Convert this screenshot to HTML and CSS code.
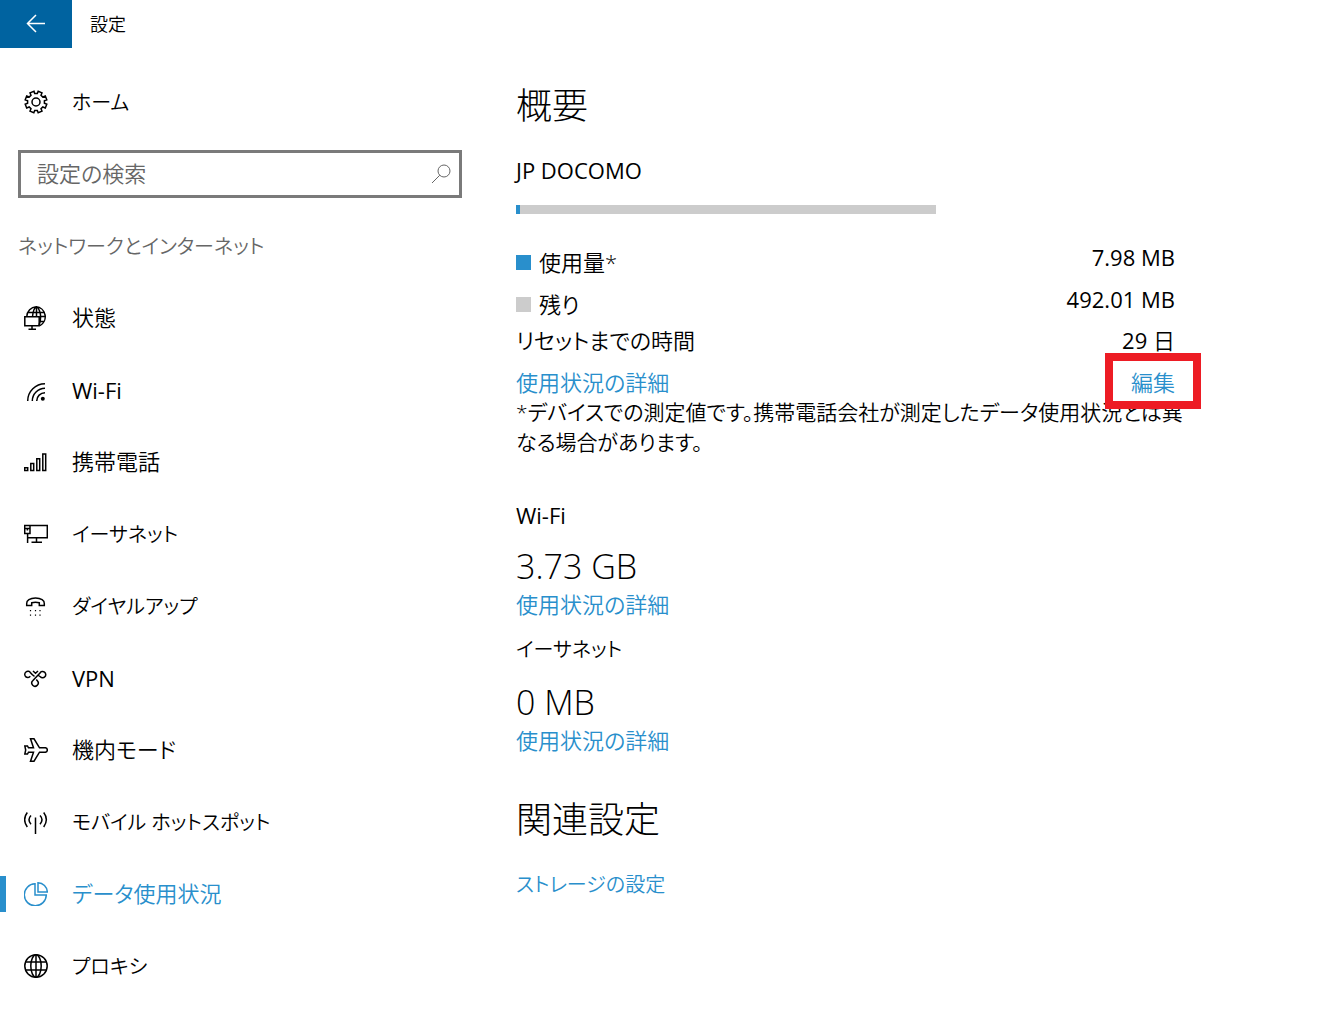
FILE: index.html
```html
<!DOCTYPE html>
<html lang="ja">
<head>
<meta charset="utf-8">
<meta name="viewport" content="width=device-width, initial-scale=1">
<title>設定</title>
<link rel="stylesheet" href="styles.css">
</head>
<body>
<header class="titlebar">
  <button class="back" type="button" aria-label="戻る">
    <svg class="icon" viewBox="0 0 24 24"><path d="M21 11.5H3.5M12 3L3.5 11.5L12 20"/></svg>
  </button>
  <span class="title">設定</span>
</header>
<div class="layout">
  <aside class="sidebar">
    <a class="nav-link home" href="#">
      <svg class="icon" viewBox="0 0 24 24"><circle cx="12" cy="12" r="4"/><path d="M10 1.2L10.7 3.6L13.3 3.6L14.2 1.2L18 2.8L17 5.2L18.8 7L21.3 6L22.8 9.8L20.4 10.8V13.2L22.8 14.2L21.3 18L18.800 17L17 18.800L18 21.200L14.200 22.800L13.300 20.400H10.700L9.800 22.800L6 21.200L7 18.800L5.200 17L2.700 18L1.200 14.200L3.600 13.200V10.800L1.200 9.800L2.700 6L5.200 7L7 5.200L6 2.800Z"/></svg>
      <span class="kana">ホーム</span>
    </a>
    <form class="search">
      <input class="search-input" type="search" placeholder="設定の検索" aria-label="設定の検索">
      <button class="search-button" type="submit" aria-label="検索">
        <svg class="icon thin" viewBox="0 0 24 24"><circle cx="15" cy="9" r="6"/><path d="M10.8 13.2L3 21"/></svg>
      </button>
    </form>
    <h2 class="category kana">ネットワークとインターネット</h2>
    <nav class="nav">
      <a class="nav-link" href="#">
        <svg class="icon" viewBox="0 0 24 24"><path d="M2.800 10.500A10 10 0 0 1 12.200 .8A9.800 10 0 0 1 16 19.600M3.500 6.500H21M16 10.500H22M16 15.500H20.500M8.500 10.500C9 5 10.500 1.500 12.500 .7C15 2 16.600 7 16.600 11C16.600 14.500 16 17 15 19M12.500 .7V10.500"/><path d="M.8 10.800H15.200V19.700H.8ZM8 19.700V23M4.500 23.200H12"/></svg>
        <span>状態</span>
      </a>
      <a class="nav-link" href="#">
        <svg class="icon" viewBox="0 0 24 24"><path d="M3.700 23A17.300 17.300 0 0 1 21 5.800M8.300 23A12.700 12.700 0 0 1 21 10.300M12.700 23A8.300 8.300 0 0 1 21 14.700"/><circle class="solid" cx="18.800" cy="20.700" r="2"/></svg>
        <span class="latin">Wi-Fi</span>
      </a>
      <a class="nav-link" href="#">
        <svg class="icon" viewBox="0 0 24 24"><path d="M.700 17.700H3.700V20.500H.700ZM6.800 13.500H9.700V20.500H6.800ZM12.800 8.800H15.700V20.500H12.800ZM18.800 4H21.700V20.500H18.800Z"/></svg>
        <span>携帯電話</span>
      </a>
      <a class="nav-link" href="#">
        <svg class="icon" viewBox="0 0 24 24"><path d="M6 3.600H23.300V15.700H3.600V21M.700 3.600H6V11.500H.700ZM.700 6.500H6M3.400 6.500V8.500M3.600 11.500V21M12.500 15.700V20M7.500 20.300H18"/></svg>
        <span class="kana">イーサネット</span>
      </a>
      <a class="nav-link" href="#">
        <svg class="icon" viewBox="0 0 24 24"><path d="M2.700 9.500C2.300 6.500 6 4 11.500 4S20.700 6.500 20.300 9.500V11.600H15.300V8.800Q11.500 7.600 7.700 8.800V11.600H2.700Z"/><path class="dots" d="M6.500 16V17.200M11.500 16V17.200M16 16V17.200M6.500 20.500V21.700M11.500 20.500V21.700M16 20.500V21.700"/></svg>
        <span class="kana">ダイヤルアップ</span>
      </a>
      <a class="nav-link" href="#">
        <svg class="icon" viewBox="0 0 24 24"><path d="M6.300 10.300A3.100 3.100 0 1 1 6.500 6.800C7.700 8.300 9 9.500 10.500 10.300M8.700 14.800L16 7A3.100 3.100 0 1 1 16.300 10.700L14.500 9.500M8.700 14.800A3.200 3.200 0 1 0 13.500 15L12.300 13.500M9 5L11.500 7.300L14 5"/></svg>
        <span class="latin">VPN</span>
      </a>
      <a class="nav-link" href="#">
        <svg class="icon" viewBox="0 0 24 24"><path d="M6.500 .8H10L15.500 9.800H21.500Q23.300 10.300 23.300 12T21.500 14.200H15.500L10 23.200H6.500L9.500 14.200H4.500L3.500 16H.8L1.700 12L.8 8H3.500L4.500 9.800H9.500Z"/></svg>
        <span>機内モード</span>
      </a>
      <a class="nav-link" href="#">
        <svg class="icon" viewBox="0 0 24 24"><path d="M11.500 7.500V24M3.300 2.500Q-2 9.500 3.300 17M19.700 2.500Q25 9.500 19.700 17M7 5.500Q3 9.700 7 14.200M16 5.500Q20 9.700 16 14.200"/></svg>
        <span class="kana">モバイル ホットスポット</span>
      </a>
      <a class="nav-link current" href="#" aria-current="page">
        <svg class="icon" viewBox="0 0 24 24"><path d="M11 1.800A11 11 0 1 0 22.300 13H11ZM14 .8V10H23.300A9.500 9.500 0 0 0 14 .8Z"/></svg>
        <span>データ使用状況</span>
      </a>
      <a class="nav-link" href="#">
        <svg class="icon" viewBox="0 0 24 24"><circle cx="12" cy="12" r="11.200"/><ellipse cx="12" cy="12" rx="5.200" ry="11.200"/><path d="M12 .8V23.200M1.800 8H22.200M1.800 16H22.200"/></svg>
        <span class="kana">プロキシ</span>
      </a>
    </nav>
  </aside>
  <main class="content">
    <h1 class="heading">概要</h1>
    <h2 class="label carrier latin">JP DOCOMO</h2>
    <div class="meter" role="img" aria-label="使用量 7.98 MB"><div class="meter-fill" style="width:1%"></div></div>
    <dl class="stats">
      <div class="stat tall"><dt><span class="swatch used"></span>使用量*</dt><dd class="latin">7.98 MB</dd></div>
      <div class="stat tall"><dt><span class="swatch"></span>残り</dt><dd class="latin">492.01 MB</dd></div>
      <div class="stat"><dt>リセットまでの時間</dt><dd><span class="latin">29</span> 日</dd></div>
    </dl>
    <div class="actions">
      <a class="link" href="#">使用状況の詳細</a>
      <a class="link edit" href="#">編集</a>
    </div>
    <p class="note">*デバイスでの測定値です。携帯電話会社が測定したデータ使用状況とは異<br>なる場合があります。</p>
    <section class="network">
      <h2 class="label latin">Wi-Fi</h2>
      <p class="amount">3.73 GB</p>
      <a class="link" href="#">使用状況の詳細</a>
    </section>
    <section class="network">
      <h2 class="label kana">イーサネット</h2>
      <p class="amount">0 MB</p>
      <a class="link" href="#">使用状況の詳細</a>
    </section>
    <section class="related">
      <h2 class="heading">関連設定</h2>
      <a class="link kana" href="#">ストレージの設定</a>
    </section>
  </main>
</div>
</body>
</html>
```

FILE: styles.css
```css
* { box-sizing: border-box; }

body {
  margin: 0;
  background: #fff;
  color: #000;
  font: 350 22px/30px "Open Sans", "Noto Sans CJK JP", sans-serif;
  font-feature-settings: "palt";
}

h1, h2, p, dl, dd { margin: 0; font-weight: inherit; font-size: inherit; }
a { color: inherit; text-decoration: none; }
button, input { font: inherit; font-feature-settings: inherit; }

/* Labels written mainly in kana are set a step smaller. */
.sidebar .kana, .content .kana { font-size: 20px; line-height: 32px; }
.latin { font-weight: 400; }

.icon {
  flex: none;
  width: 24px;
  height: 24px;
  fill: none;
  stroke: currentColor;
  stroke-width: 1.5;
}
.icon.thin { stroke-width: 1; }
.icon .solid { fill: currentColor; stroke: none; }
.icon .dots { stroke-width: 1.2; }

.titlebar { display: flex; align-items: center; height: 48px; }
.back {
  display: grid;
  place-items: center;
  width: 72px;
  height: 48px;
  padding: 0;
  border: 0;
  background: #0063a0;
  color: #fff;
}
.title { margin-left: 18px; font-size: 18px; }

.layout { display: flex; align-items: flex-start; }
.sidebar { flex: 0 0 480px; padding-top: 18px; }

.nav-link {
  display: flex;
  align-items: center;
  gap: 24px;
  height: 72px;
  padding-left: 24px;
}
.nav-link span { padding-bottom: 2px; }
.nav-link .kana { padding: 1px 0 0; }
.nav-link .latin { padding: 0; }
.current { position: relative; color: #298fcc; }
.current::before {
  content: "";
  position: absolute;
  left: 0;
  top: 18px;
  width: 6px;
  height: 36px;
  background: #298fcc;
}

.search {
  display: flex;
  align-items: center;
  height: 48px;
  margin: 12px 18px 0;
  border: 3px solid #7a7a7a;
  color: #666;
}
.search-input {
  flex: 1;
  min-width: 0;
  padding: 0 0 2px 16px;
  border: 0;
  outline: 0;
  background: none;
  appearance: none;
}
.search-input::placeholder { color: #666; opacity: 1; }
.search-button {
  display: flex;
  padding: 0 6px;
  border: 0;
  background: none;
  color: inherit;
}
.sidebar .category { margin: 33px 18px 19px; color: #666; }

.content { flex: 0 1 695px; min-width: 0; padding: 34px 0 48px 36px; }
.heading { font-size: 36px; line-height: 48px; font-weight: 300; }
.carrier { margin-top: 25px; }
.meter { width: 420px; max-width: 100%; height: 9px; margin-top: 20px; background: #ccc; }
.meter-fill { height: 100%; background: #298fcc; }

.stats { margin-top: 27px; }
.stat { display: flex; justify-content: space-between; }
.stat.tall { height: 42px; line-height: 32px; }
.stat dt { display: flex; align-items: center; }
.swatch { width: 15px; height: 15px; margin-right: 8px; background: #ccc; }
.swatch.used { background: #298fcc; }

.link { color: #298fcc; }
.actions { display: flex; justify-content: space-between; margin-top: 12px; }
.edit { position: relative; }
.edit::after {
  content: "";
  position: absolute;
  inset: -14px -26px -12px;
  border: 8px solid #ed1c24;
}
.note { font-size: 21px; white-space: nowrap; }

.network { margin-top: 15px; }
.note + .network { margin-top: 43px; }
.network .link, .related .link { display: block; }
.amount { margin-top: 14px; font-size: 34px; line-height: 45px; }
.related { margin-top: 41px; }
.related .link { margin-top: 25px; }
```
